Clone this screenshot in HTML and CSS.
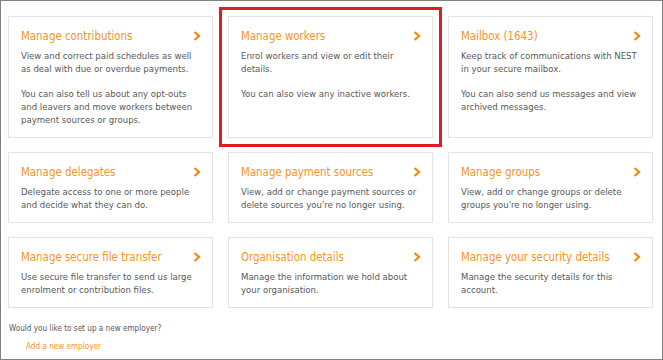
FILE: index.html
```html
<!DOCTYPE html>
<html lang="en">
<head>
<meta charset="utf-8">
<title>Employer home</title>
<link rel="stylesheet" href="styles.css">
</head>
<body>
<div class="frame">
  <div class="grid">
    <a class="card" href="#">
      <div class="card-head"><h2 class="card-title">Manage contributions</h2><svg class="chev" viewBox="0 0 8 10" width="8" height="10"><polyline points="1.5,1 6,5 1.5,9" /></svg></div>
      <p class="card-text">View and correct paid schedules as well as deal with due or overdue payments.</p>
      <p class="card-text">You can also tell us about any opt-outs and leavers and move workers between payment sources or groups.</p>
    </a>
    <a class="card card-selected" href="#">
      <div class="card-head"><h2 class="card-title">Manage workers</h2><svg class="chev" viewBox="0 0 8 10" width="8" height="10"><polyline points="1.5,1 6,5 1.5,9" /></svg></div>
      <p class="card-text">Enrol workers and view or edit their details.</p>
      <p class="card-text">You can also view any inactive workers.</p>
    </a>
    <a class="card" href="#">
      <div class="card-head"><h2 class="card-title">Mailbox (1643)</h2><svg class="chev" viewBox="0 0 8 10" width="8" height="10"><polyline points="1.5,1 6,5 1.5,9" /></svg></div>
      <p class="card-text">Keep track of communications with NEST in your secure mailbox.</p>
      <p class="card-text">You can also send us messages and view archived messages.</p>
    </a>
    <a class="card" href="#">
      <div class="card-head"><h2 class="card-title">Manage delegates</h2><svg class="chev" viewBox="0 0 8 10" width="8" height="10"><polyline points="1.5,1 6,5 1.5,9" /></svg></div>
      <p class="card-text">Delegate access to one or more people and decide what they can do.</p>
    </a>
    <a class="card" href="#">
      <div class="card-head"><h2 class="card-title">Manage payment sources</h2><svg class="chev" viewBox="0 0 8 10" width="8" height="10"><polyline points="1.5,1 6,5 1.5,9" /></svg></div>
      <p class="card-text">View, add or change payment sources or delete sources you're no longer using.</p>
    </a>
    <a class="card" href="#">
      <div class="card-head"><h2 class="card-title">Manage groups</h2><svg class="chev" viewBox="0 0 8 10" width="8" height="10"><polyline points="1.5,1 6,5 1.5,9" /></svg></div>
      <p class="card-text">View, add or change groups or delete groups you're no longer using.</p>
    </a>
    <a class="card" href="#">
      <div class="card-head"><h2 class="card-title">Manage secure file transfer</h2><svg class="chev" viewBox="0 0 8 10" width="8" height="10"><polyline points="1.5,1 6,5 1.5,9" /></svg></div>
      <p class="card-text">Use secure file transfer to send us large enrolment or contribution files.</p>
    </a>
    <a class="card" href="#">
      <div class="card-head"><h2 class="card-title">Organisation details</h2><svg class="chev" viewBox="0 0 8 10" width="8" height="10"><polyline points="1.5,1 6,5 1.5,9" /></svg></div>
      <p class="card-text">Manage the information we hold about your organisation.</p>
    </a>
    <a class="card" href="#">
      <div class="card-head"><h2 class="card-title">Manage your security details</h2><svg class="chev" viewBox="0 0 8 10" width="8" height="10"><polyline points="1.5,1 6,5 1.5,9" /></svg></div>
      <p class="card-text">Manage the security details for this account.</p>
    </a>
  </div>
  <p class="question">Would you like to set up a new employer?</p>
  <a class="add-link" href="#">Add a new employer</a>
</div>
</body>
</html>
```

FILE: styles.css
```css
* { box-sizing: border-box; }
html, body { margin: 0; padding: 0; background: #fff; }
body { font-family: "DejaVu Sans Condensed", "DejaVu Sans", sans-serif; font-stretch: condensed; }

.frame {
  width: 663px;
  height: 360px;
  border: 1px solid #808080;
  padding: 15px 9px 0 7px;
  display: flex;
  flex-direction: column;
  align-items: flex-start;
}

.grid {
  display: grid;
  grid-template-columns: repeat(3, 205px);
  column-gap: 15px;
  row-gap: 14px;
}

.card {
  display: block;
  text-decoration: none;
  border: 1px solid #e3e3e3;
  box-shadow: 0 0 1px rgba(0,0,0,0.06);
  padding: 11px 12px 11px 12px;
  background: #fff;
}

.card-selected {
  outline: 3px solid #e31b23;
  outline-offset: 6px;
}

.card-head {
  display: flex;
  align-items: center;
  justify-content: space-between;
  height: 16px;
}

.card-title {
  margin: 0;
  font-size: 11.4px;
  line-height: 16px;
  font-weight: normal;
  color: #f7931e;
  white-space: nowrap;
}

.chev {
  display: block;
  margin-right: -1px;
}
.chev polyline {
  fill: none;
  stroke: #f48a12;
  stroke-width: 2.3;
  stroke-linecap: butt;
  stroke-linejoin: miter;
}

.card-text {
  margin: 5px 0 0 0;
  font-size: 9.5px;
  line-height: 13px;
  color: #575757;
}
.card-text + .card-text { margin-top: 12px; }

.question {
  margin: 14px 0 0 1px;
  font-size: 8.1px;
  line-height: 12px;
  color: #575757;
}

.add-link {
  margin: 6px 0 0 18px;
  font-size: 8.1px;
  line-height: 12px;
  color: #f7931e;
  text-decoration: none;
}
```
